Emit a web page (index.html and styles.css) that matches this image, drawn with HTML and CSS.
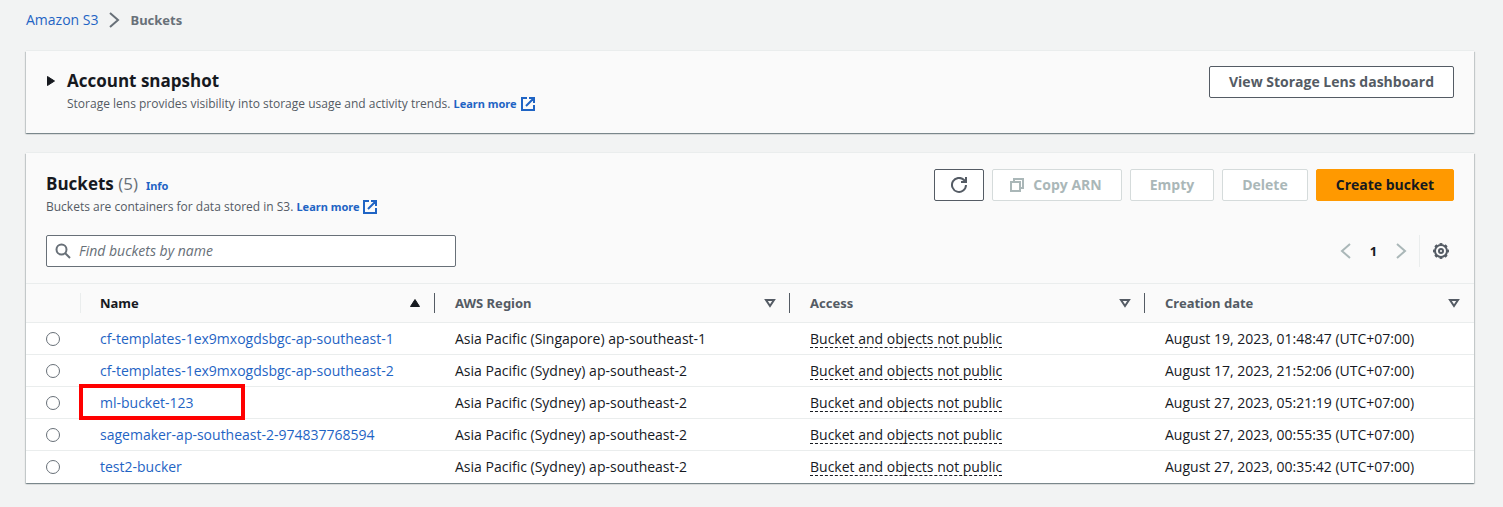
FILE: index.html
```html
<!DOCTYPE html>
<html lang="en">
<head>
<meta charset="utf-8">
<meta name="viewport" content="width=device-width, initial-scale=1">
<title>Amazon S3 - Buckets</title>
<link rel="stylesheet" href="styles.css">
</head>
<body>
<svg class="sprite" aria-hidden="true">
  <symbol id="external" viewBox="0 0 16 16"><path d="M7 2H2v12h12V9M9 2h5v5M6 10l8-8"/></symbol>
  <symbol id="prev" viewBox="0 0 16 16"><path d="M12 1 4 8l8 7"/></symbol>
  <symbol id="next" viewBox="0 0 16 16"><path d="m4 1 8 7-8 7"/></symbol>
  <symbol id="sort" viewBox="0 0 16 16"><path d="M5 5h8L9 11Z"/></symbol>
</svg>
<nav class="breadcrumbs" aria-label="Breadcrumbs">
  <a class="link" href="#">Amazon S3</a>
  <svg class="icon"><use href="#next"/></svg>
  <span class="current">Buckets</span>
</nav>
<main class="content">
  <section class="card snapshot">
    <button class="expand" type="button" aria-label="Expand account snapshot"><svg class="icon solid" viewBox="0 0 16 16"><path d="M5.500 3.500v9l7-4.500Z"/></svg></button>
    <div class="heading">
      <h2 class="title">Account snapshot</h2>
      <p class="description">Storage lens provides visibility into storage usage and activity trends. <a class="link strong" href="#">Learn more <svg class="icon external"><use href="#external"/></svg></a></p>
    </div>
    <button class="button" type="button">View Storage Lens dashboard</button>
  </section>

  <section class="card buckets">
    <header class="bar">
      <div class="heading">
        <div class="title-line"><h2 class="title">Buckets <span class="count">(5)</span></h2><a class="link info" href="#">Info</a></div>
        <p class="description">Buckets are containers for data stored in S3. <a class="link strong" href="#">Learn more <svg class="icon external"><use href="#external"/></svg></a></p>
      </div>
      <div class="actions">
        <button class="button refresh" type="button" aria-label="Refresh"><svg class="icon" viewBox="0 0 16 16"><path d="M15 8a7 7 0 1 1-2-5l2 2M15 0v5h-5"/></svg></button>
        <button class="button copy" type="button" disabled><svg class="icon" viewBox="0 0 16 16"><path d="M2 5h9v9H2ZM5 5V2h9v9h-3"/></svg>Copy ARN</button>
        <button class="button" type="button" disabled>Empty</button>
        <button class="button" type="button" disabled>Delete</button>
        <button class="button primary" type="button">Create bucket</button>
      </div>
    </header>
    <div class="tools">
      <label class="search">
        <svg class="icon" viewBox="0 0 16 16"><circle cx="6.500" cy="6.500" r="5"/><path d="m10 10 5 5"/></svg>
        <input type="search" placeholder="Find buckets by name" aria-label="Find buckets by name">
      </label>
      <div class="paging">
        <button class="plain muted" type="button" aria-label="Previous page" disabled><svg class="icon"><use href="#prev"/></svg></button>
        <button class="plain page" type="button" aria-current="page">1</button>
        <button class="plain muted" type="button" aria-label="Next page" disabled><svg class="icon"><use href="#next"/></svg></button>
        <button class="plain settings" type="button" aria-label="Preferences"><svg class="icon" viewBox="0 0 16 16"><circle cx="8" cy="8" r="6"/><circle cx="8" cy="8" r="7" pathLength="80" stroke-dasharray="5" stroke-dashoffset="2.500"/><circle cx="8" cy="8" r="2"/></svg></button>
      </div>
    </div>
    <table class="table">
      <colgroup><col class="col-select"><col class="col-data"><col class="col-data"><col class="col-data"><col></colgroup>
      <thead>
        <tr>
          <th aria-label="Select"></th>
          <th class="sorted" scope="col" aria-sort="ascending"><div class="column"><span>Name</span><svg class="icon solid" viewBox="0 0 16 16"><path d="M4.500 11.500h9L9 4.500Z"/></svg></div></th>
          <th scope="col"><div class="column"><span>AWS Region</span><svg class="icon"><use href="#sort"/></svg></div></th>
          <th scope="col"><div class="column"><span>Access</span><svg class="icon"><use href="#sort"/></svg></div></th>
          <th scope="col"><div class="column"><span>Creation date</span><svg class="icon"><use href="#sort"/></svg></div></th>
        </tr>
      </thead>
      <tbody>
        <tr><td><input class="radio" type="radio" name="bucket" aria-labelledby="b1"></td><td><a class="link" id="b1" href="#">cf-templates-1ex9mxogdsbgc-ap-southeast-1</a></td><td>Asia Pacific (Singapore) ap-southeast-1</td><td><span class="access">Bucket and objects not public</span></td><td>August 19, 2023, 01:48:47 (UTC+07:00)</td></tr>
        <tr><td><input class="radio" type="radio" name="bucket" aria-labelledby="b2"></td><td><a class="link" id="b2" href="#">cf-templates-1ex9mxogdsbgc-ap-southeast-2</a></td><td>Asia Pacific (Sydney) ap-southeast-2</td><td><span class="access">Bucket and objects not public</span></td><td>August 17, 2023, 21:52:06 (UTC+07:00)</td></tr>
        <tr><td><input class="radio" type="radio" name="bucket" aria-labelledby="b3"></td><td class="marked"><a class="link" id="b3" href="#">ml-bucket-123</a></td><td>Asia Pacific (Sydney) ap-southeast-2</td><td><span class="access">Bucket and objects not public</span></td><td>August 27, 2023, 05:21:19 (UTC+07:00)</td></tr>
        <tr><td><input class="radio" type="radio" name="bucket" aria-labelledby="b4"></td><td><a class="link" id="b4" href="#">sagemaker-ap-southeast-2-974837768594</a></td><td>Asia Pacific (Sydney) ap-southeast-2</td><td><span class="access">Bucket and objects not public</span></td><td>August 27, 2023, 00:55:35 (UTC+07:00)</td></tr>
        <tr><td><input class="radio" type="radio" name="bucket" aria-labelledby="b5"></td><td><a class="link" id="b5" href="#">test2-bucker</a></td><td>Asia Pacific (Sydney) ap-southeast-2</td><td><span class="access">Bucket and objects not public</span></td><td>August 27, 2023, 00:35:42 (UTC+07:00)</td></tr>
      </tbody>
    </table>
  </section>
</main>
</body>
</html>
```
FILE: styles.css
```css
*, *::after { box-sizing: border-box; }
body {
  margin: 0;
  padding: 9px 29px 24px 26px;
  background: #f2f3f3;
  color: #16191f;
  font: 14px/22px "Open Sans", "Noto Sans", sans-serif;
}
button, input { font: inherit; }
h2, p { margin: 0; }
.sprite { position: absolute; width: 0; height: 0; }
.icon {
  flex: none;
  width: 16px;
  height: 16px;
  fill: none;
  stroke: currentColor;
  stroke-width: 2;
}
.icon.solid { fill: currentColor; stroke-width: 1; stroke-linejoin: round; }
.icon.external { vertical-align: -4px; }
.link { color: #1f64c4; text-decoration: none; }
.strong, .info { font: 700 11px/16px "Noto Sans", sans-serif; }

.breadcrumbs { display: flex; align-items: center; gap: 8px; margin-bottom: 20px; color: #687078; }
.current { font: 700 13px/22px "Noto Sans", sans-serif; }

.content { display: grid; gap: 20px; }
.card {
  background: #fafafa;
  box-shadow: 0 1px 1px rgba(0, 28, 36, .3), 1px 1px 1px rgba(0, 28, 36, .15), -1px 1px 1px rgba(0, 28, 36, .15), 0 -1px 0 #eaeded;
}
.snapshot { display: flex; align-items: flex-start; padding: 15px 20px 18px 16px; }
.snapshot .heading { flex: 1; padding: 4px 0 0 9px; }
.expand { display: flex; width: 16px; height: 30px; padding: 0; align-items: center; border: 0; background: none; color: #16191f; }
.title { font-size: 17px; line-height: 22px; font-weight: 700; }
.title-line { display: flex; align-items: baseline; gap: 8px; height: 22px; }
.count { color: #687078; font-weight: 400; }
.description { height: 23px; color: #545b64; font-size: 12px; line-height: 23px; }

.button {
  display: flex;
  align-items: center;
  gap: 8px;
  height: 32px;
  padding: 0 19px;
  border: 1px solid #545b64;
  border-radius: 2px;
  background: #fff;
  color: #545b64;
  font-weight: 700;
  white-space: nowrap;
}
.button:disabled { border-color: #d5dbdb; color: #aab7b8; }
.button.refresh, .button.copy { padding-left: 16px; }
.button.refresh { padding-right: 16px; }
.button.primary { border-color: #ff9900; background: #ff9900; color: #16191f; }
.bar { display: flex; justify-content: space-between; padding: 16px 20px 0; }
.bar .heading { padding-top: 4px; }
.actions { display: flex; gap: 8px; }
.tools { display: flex; justify-content: space-between; align-items: center; padding: 17px 25px 16px 20px; }
.search {
  display: flex;
  align-items: center;
  gap: 8px;
  width: 410px;
  height: 32px;
  padding: 0 8px;
  border: 1px solid #687078;
  border-radius: 2px;
  background: #fff;
  color: #687078;
}
.search input { flex: 1; min-width: 0; padding: 0; border: 0; outline: 0; background: none; }
.search input::placeholder { color: #687078; font-style: italic; opacity: 1; }
.paging { display: flex; align-items: center; }
.plain { display: flex; align-items: center; justify-content: center; height: 32px; padding: 0 6px; border: 0; background: none; color: #545b64; }
.muted { color: #aab7b8; }
.page { width: 27px; padding: 0; color: #16191f; font: 700 13px/22px "Noto Sans", sans-serif; }
.settings { margin-left: 4px; padding: 0 0 0 13px; border-left: 1px solid #eaeded; }

.table { width: 100%; border-collapse: separate; border-spacing: 0; table-layout: fixed; border-top: 1px solid #eaeded; }
.col-select { width: 54px; }
.col-data { width: 355px; }
.table th { height: 39px; padding: 0; border-bottom: 1px solid #eaeded; color: #545b64; font: 700 13px/20px "Noto Sans", sans-serif; text-align: left; }
.table .sorted { color: #16191f; }
.column { display: flex; align-items: center; justify-content: space-between; height: 20px; padding: 0 12px 0 20px; border-right: 1px solid #545b64; }
.sorted .column { padding-left: 19px; border-left: 1px solid #eaeded; }
th:last-child .column { padding-right: 13px; border-right: 0; }
.table td { height: 32px; padding: 0 20px; border-bottom: 1px solid #eaeded; background: #fff; white-space: nowrap; }
.table tbody tr:last-child td { border-bottom: 0; }
.radio { display: block; width: 14px; height: 14px; margin: 0; border: 1px solid #687078; border-radius: 50%; appearance: none; background: #fff; }
.access { border-bottom: 1px dashed #16191f; line-height: 17px; display: inline-block; }
.marked { position: relative; }
.marked::after { content: ""; position: absolute; top: -3px; left: -1px; width: 166px; height: 36px; border: 4px solid #f00; pointer-events: none; }
```
